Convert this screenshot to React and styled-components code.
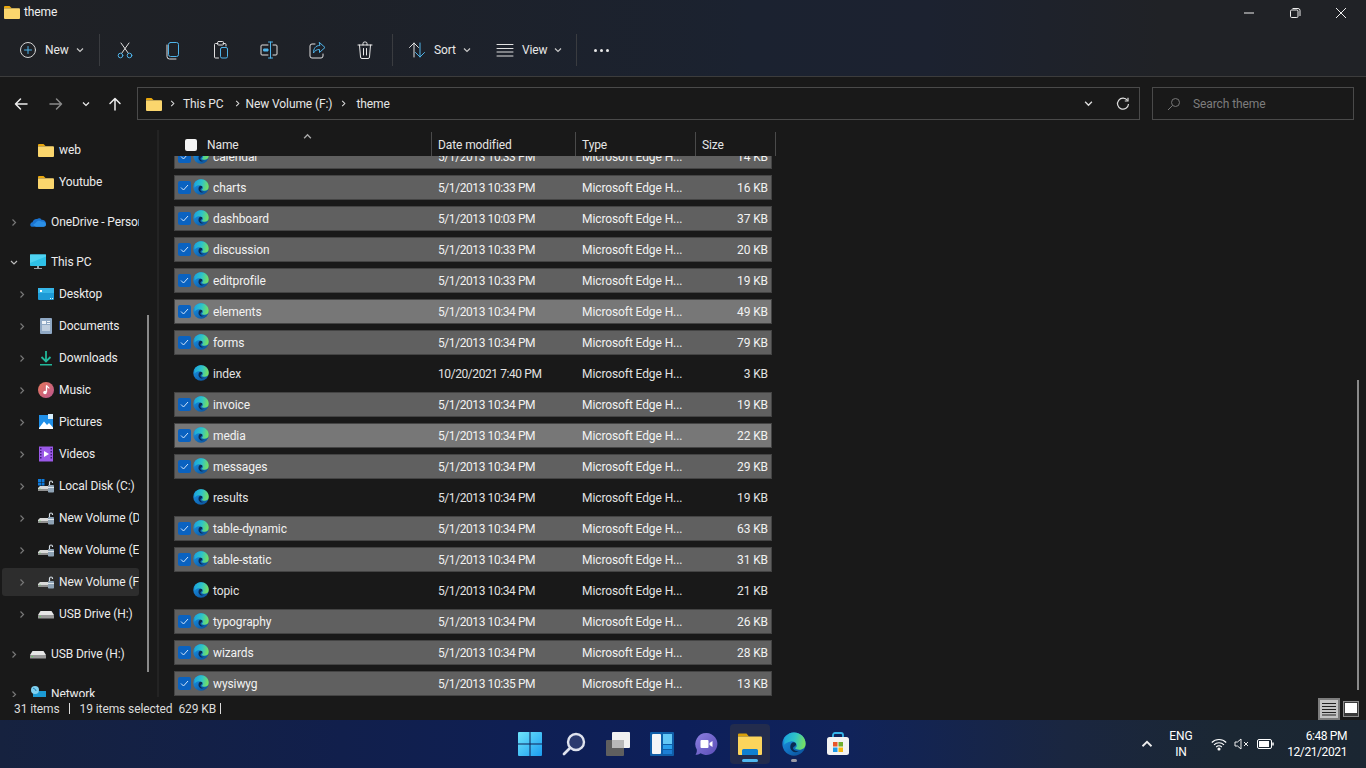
import React from "react";
import styled, { createGlobalStyle } from "styled-components";

const Global = createGlobalStyle`
  html, body { margin: 0; padding: 0; background: #191919; width: 1366px; height: 768px; overflow: hidden; }
  * { box-sizing: border-box; }
  body { font-family: "Roboto", "Open Sans", sans-serif; font-size: 12px; color: #e6e6e6; letter-spacing: -0.1px; }
`;

const Folder = ({ s = 16 }) => (
  <svg width={s} height={s} viewBox="0 0 16 16">
    <path d="M0 3a1 1 0 0 1 1-1h4.500L7.500 4H0z" fill="#e9a70d" />
    <path d="M0 4.200 h15a1 1 0 0 1 1 1V14a1 1 0 0 1-1 1H1a1 1 0 0 1-1-1z" fill="#fbd66d" />
  </svg>
);
const Edge = ({ s = 16 }) => (
  <svg width={s} height={s} viewBox="0 0 32 32">
    <defs>
      <linearGradient id="edgeA" x1="0" y1="0.300" x2="1" y2="0.500"><stop offset="0" stopColor="#1ba6dd" /><stop offset=".5" stopColor="#30c4c6" /><stop offset="1" stopColor="#78e05e" /></linearGradient>
      <linearGradient id="edgeB" x1="0" y1="0" x2="0.700" y2="1"><stop offset="0" stopColor="#1e9ae4" /><stop offset=".6" stopColor="#1274c4" /><stop offset="1" stopColor="#0c569f" /></linearGradient>
    </defs>
    <circle cx="16" cy="16" r="15.500" fill="url(#edgeB)" />
    <path d="M3 8C6.500 3 11 .5 16 .5c8.800 0 15.500 6.700 15.500 15 0 5-3.500 8-8.500 8-2.800 0-4.800-.8-5.800-2.200 2-.8 2.800-2.300 2.300-4.300C19 14 15.500 12 11.500 12.500 8 13 5 14.500 3 17z" fill="url(#edgeA)" />
    <path d="M11 20c0-4.500 2.300-6.500 4.500-6.500s3.500 1.500 3.200 3.200c-.3 1.300-1.300 2.200-2.700 2.800-1 .5-1.400 1.500-1 2.800.8 2.300 4 3.700 7.500 3.200-3 1.500-5.500 1.800-7.500.8-2.300-1.300-4-3.800-4-6.300z" fill="#0a2a52" />
  </svg>
);
const Cloud = () => (
  <svg width="16" height="16" viewBox="0 0 16 16"><path d="M1 12.500c-1.400-1.300-.8-4 1.500-4.300C3 6 5 4.500 7.200 5c1-1 3.300-1 4.300.7 2.300-.2 4.500 1.600 4.500 3.800 0 1.800-1.200 3.300-3 3.300H3c-.8 0-1.500-.1-2-.3z" fill="#1a73d0" /><path d="M6 8.500C7 6.500 10 6 11.500 7.500c2-.2 4.500 1 4.500 3 0 1.300-1 2.300-2.500 2.300H6L3 11z" fill="#2b8fe6" /></svg>
);
const Monitor = () => (
  <svg width="16" height="16" viewBox="0 0 16 16"><rect x="0" y="0.500" width="16" height="11.500" rx=".8" fill="#2ec1e8" /><path d="M0 .5h16v2L0 9z" fill="#4fd3f2" /><rect x="7" y="12" width="2" height="2" fill="#9aa5ad" /><rect x="4" y="14" width="8" height="1" fill="#9aa5ad" /></svg>
);
const DesktopIco = () => (
  <svg width="16" height="16" viewBox="0 0 16 16"><rect x="0" y="2" width="16" height="12" rx="1" fill="#1d9ad6" /><rect x="0" y="2" width="16" height="5" fill="#36b6e8" /><rect x="2" y="4" width="2" height="2" fill="#fff" /><rect x="12" y="12" width="1" height="1" fill="#dff" /><rect x="14" y="12" width="1" height="1" fill="#dff" /></svg>
);
const Docs = () => (
  <svg width="16" height="16" viewBox="0 0 16 16"><rect x="2" y="0" width="12" height="16" rx="1" fill="#8fa8c4" /><rect x="4" y="3" width="4" height="3" fill="#eef3f8" /><path d="M9 3.500h3M9 5.500h3M4 8h8M4 10h8M4 12h8" stroke="#eef3f8" strokeWidth="1" /></svg>
);
const Down = () => (
  <svg width="16" height="16" viewBox="0 0 16 16"><path d="M8 1v10M3.500 7 8 11.500 12.500 7" fill="none" stroke="#22b89a" strokeWidth="1.800" /><rect x="2" y="14" width="12" height="1.500" fill="#22b89a" /></svg>
);
const Music = () => (
  <svg width="16" height="16" viewBox="0 0 16 16"><defs><linearGradient id="mus" x1="0" y1="0" x2="1" y2="1"><stop offset="0" stopColor="#e8785a" /><stop offset="1" stopColor="#b9558f" /></linearGradient></defs><circle cx="8" cy="8" r="8" fill="url(#mus)" /><path d="M8.500 3.500v6.500" stroke="#fff" strokeWidth="1.300" /><circle cx="7" cy="10.500" r="1.800" fill="#fff" /><path d="M8.500 3.500c.5 1.500 2.500 1.500 2.500 3" stroke="#fff" strokeWidth="1.200" fill="none" /></svg>
);
const Pics = () => (
  <svg width="16" height="16" viewBox="0 0 16 16"><rect x="1" y="1" width="14" height="14" fill="#1f8fe8" /><path d="M1 14 6 7.500l3 3.500 2-2 4 4.500V15H1z" fill="#fff" /><rect x="10" y="0" width="5" height="5" fill="#d7eefc" /></svg>
);
const Videos = () => (
  <svg width="16" height="16" viewBox="0 0 16 16"><rect x="1" y="0.500" width="14" height="15" fill="#9b59e8" /><path d="M2 2h1.500v1.500H2zM2 5h1.500v1.500H2zM2 8h1.500v1.500H2zM2 11h1.500v1.500H2zM12.500 2H14v1.500h-1.500zM12.500 5H14v1.500h-1.500zM12.500 8H14v1.500h-1.500zM12.500 11H14v1.500h-1.500z" fill="#3d1b78" /><path d="M6 5l5 3-5 3z" fill="#fff" /></svg>
);
const Drive = ({ win }) => (
  <svg width="16" height="16" viewBox="0 0 16 16">
    <path d="M2 8h9v4H0V10z" fill="#d9d9d9" /><rect x="0" y="11" width="12" height="2" fill="#8f8f8f" /><rect x="1.500" y="10.500" width="1" height="1" fill="#5fd35f" />
    <rect x="10" y="7" width="6" height="7.500" rx=".8" fill="#8fa3b5" /><path d="M11.500 7V4.500a1.500 1.500 0 0 1 3 0V5" fill="none" stroke="#d5dde4" strokeWidth="1.200" /><rect x="10" y="9" width="6" height="1" fill="#dfe6ec" />
    {win && <path d="M0 1h3v3H0zM3.500 1h3v3h-3zM0 4.500h3v3H0zM3.500 4.500h3v3h-3z" fill="#0f7bdc" />}
  </svg>
);
const Usb = () => (
  <svg width="16" height="16" viewBox="0 0 16 16"><path d="M2.500 5h11L16 9H0z" fill="#e6e6e6" /><rect x="0" y="9" width="16" height="3.500" rx=".5" fill="#9a9a9a" /><rect x="1.500" y="10" width="1.500" height="1" fill="#5fd35f" /></svg>
);
const Net = () => (
  <svg width="16" height="16" viewBox="0 0 16 16"><rect x="3" y="5" width="13" height="10" fill="#1b9ad4" /><circle cx="5" cy="4" r="4" fill="#7fd0f0" /><path d="M3 2c1 1 3 1 3 3" stroke="#1f7cb0" fill="none" /></svg>
);

const Svg = ({ children, s = 20, v = 20 }) => (
  <svg width={s} height={s} viewBox={`0 0 ${v} ${v}`} fill="none" stroke="#e8e8e8" strokeWidth="1" strokeLinecap="round" strokeLinejoin="round">{children}</svg>
);
const B = "#4fb4ea";
const Tb = {
  plus: <Svg><circle cx="10" cy="10" r="7.500" stroke="#d5d5d5" /><path d="M10 6.500v7M6.500 10h7" stroke={B} /></Svg>,
  cut: <Svg><path d="M6 3l7.500 10.500M14 3 6.500 13.500" stroke="#e0e0e0" /><circle cx="5.500" cy="15.500" r="2.300" stroke={B} /><circle cx="14.500" cy="15.500" r="2.300" stroke={B} /></Svg>,
  copy: <Svg><rect x="5.500" y="2.500" width="10" height="14" rx="2" stroke={B} /><path d="M4 5v11.500a2.500 2.500 0 0 0 2.500 2.500H13" stroke="#e0e0e0" /></Svg>,
  paste: <Svg><path d="M7 3.500H4.500a1 1 0 0 0-1 1V17a1 1 0 0 0 1 1h3M12 3.500h2a1 1 0 0 1 1 1V6" stroke="#e0e0e0" /><rect x="6.500" y="1.500" width="6" height="3.500" rx="1" stroke="#e0e0e0" /><rect x="9.500" y="7.500" width="7" height="10.500" rx="1.500" stroke={B} /></Svg>,
  rename: <Svg><path d="M9 5H3a1 1 0 0 0-1 1v8a1 1 0 0 0 1 1h6M14 5h3a1 1 0 0 1 1 1v8a1 1 0 0 1-1 1h-3" stroke="#e0e0e0" /><path d="M11.500 2v16M9.500 2h4M9.500 18h4" stroke={B} /><rect x="5" y="9" width="4" height="2" fill={B} stroke={B} /></Svg>,
  share: <Svg><path d="M8 4H5a2 2 0 0 0-2 2v10a2 2 0 0 0 2 2h9a2 2 0 0 0 2-2v-2" stroke="#e0e0e0" /><path d="M12.500 2.500 18 7.500l-5.500 5V9.500c-3 0-4.500 1-6 3.500 0-4.500 2-7.500 6-7.500z" stroke={B} /></Svg>,
  del: <Svg><path d="M3 5h14M8 5V3.500a1.500 1.500 0 0 1 1.500-1.500h1A1.500 1.500 0 0 1 12 3.500V5M4.500 5l1 12a1.500 1.500 0 0 0 1.500 1.500h6a1.500 1.500 0 0 0 1.500-1.500l1-12M8.500 8.500v6.500M11.500 8.500v6.500" /></Svg>,
  sort: <Svg><path d="M7 17V3M2.500 7.500 7 3l4.500 4.500" stroke="#e0e0e0" /><path d="M13 3v14M8.500 12.500 13 17l4.500-4.500" stroke={B} /></Svg>,
  view: <Svg><path d="M2 4.500h16M2 8.500h16M2 12h16M2 16h16" stroke="#e0e0e0" /></Svg>,
};

const Chevron = ({ c = "#c8c8c8", dir = "down", s = 8 }) => (
  <svg width={s} height={s} viewBox="0 0 8 8" fill="none" stroke={c} strokeWidth="1.200">
    {dir === "down" ? <path d="M1 2.500 4 5.500 7 2.500" /> : dir === "right" ? <path d="M2.500 1 5.500 4 2.500 7" /> : <path d="M1 5.500 4 2.500 7 5.500" />}
  </svg>
);

const Shell = styled.div`
  width: 1366px; height: 768px; display: flex; flex-direction: column; overflow: hidden; background: #191919;
`;
const Head = styled.div`
  height: 77px; flex: none; border-bottom: 1px solid #3c3c3c;
  background: linear-gradient(90deg, #1f2125 0, #1e2127 20%, #1b2230 55%, #1c2230 68%, #202226 85%, #202226 100%);
`;
const TitleBar = styled.div`
  height: 26px; display: flex; align-items: center; justify-content: space-between; padding: 0 2px 0 4px;
`;
const TitleLeft = styled.div`
  display: flex; align-items: center; gap: 4px; font-size: 12px; color: #f0f0f0; margin-top: -3px;
`;
const WinBtns = styled.div`display: flex;`;
const WinBtn = styled.div`
  width: 46px; height: 28px; display: flex; align-items: center; justify-content: center;
`;
const Toolbar = styled.div`
  height: 48px; display: flex; align-items: center; padding-left: 7px;
`;
const TextBtn = styled.div`
  display: flex; align-items: center; height: 36px; width: ${p => p.$w}px; padding-left: ${p => p.$pl}px; gap: 7px; color: #e8e8e8; font-size: 12px;
  & > span { width: ${p => p.$tw}px; }
`;
const IconBtns = styled.div`display: flex; padding: 0 3px 0 1px;`;
const IconBtn = styled.div`
  width: 48px; height: 36px; display: flex; align-items: center; justify-content: center;
`;
const Sep = styled.div`
  width: 1px; height: 32px; background: #3a3c40; flex: none;
`;
const Dots = styled.div`
  width: 48px; display: flex; align-items: center; justify-content: center; gap: 3px;
  & > i { width: 3px; height: 3px; border-radius: 50%; background: #e8e8e8; display: block; }
`;
const Nav = styled.div`
  height: 53px; flex: none; display: flex; align-items: center;
`;
const NavBtns = styled.div`
  width: 137px; display: flex; align-items: center; padding-left: 3px;
`;
const NavBtn = styled.div`
  width: ${p => p.$w}px; display: flex; align-items: center; justify-content: center;
`;
const Addr = styled.div`
  width: 1003px; height: 33px; border: 1px solid #4a4a4a; display: flex; align-items: center; padding-left: 8px; color: #e6e6e6;
`;
const Crumbs = styled.div`
  flex: 1; display: flex; align-items: center;
`;
const Crumb = styled.span`
  margin: 0 ${p => p.$mr}px 0 ${p => p.$ml}px; white-space: nowrap; display: flex;
`;
const AddrTail = styled.div`
  display: flex; align-items: center; gap: 23px; padding-right: 9px;
`;
const Search = styled.div`
  width: 202px; height: 33px; margin-left: 12px; border: 1px solid #4a4a4a; display: flex; align-items: center; padding-left: 14px; gap: 12px; color: #7d7d7d;
`;
const Main = styled.div`
  flex: 1; min-height: 0; display: flex; position: relative;
`;
const Side = styled.div`
  width: 157px; flex: none; padding: 4px 0 0 2px; overflow: hidden; position: relative;
`;
const SideRow = styled.div`
  width: 137px; height: ${p => (p.$sel ? 28 : 32)}px; margin: ${p => (p.$sel ? "2px 0" : "0")}; margin-top: ${p => (p.$gap ? "8px" : p.$sel ? "2px" : "0")};
  display: flex; align-items: center; white-space: nowrap; overflow: hidden;
  padding-left: ${p => (p.$lvl ? 16 : 8)}px;
  background: ${p => (p.$sel ? "#2d2d2d" : "transparent")}; border-radius: 3px;
  color: #ececec;
`;
const Arrow = styled.div`
  width: 8px; flex: none; margin-right: 12px; display: flex; align-items: center; justify-content: center;
`;
const SideIcon = styled.div`
  width: 16px; height: 16px; flex: none; margin-right: 5px; display: flex;
`;
const Thumb = styled.div`
  position: absolute; left: 147px; top: 185px; width: 2px; height: 357px; background: #8a8a8a;
`;
const Divider = styled.div`
  width: 2px; flex: none; background: #232323;
`;
const ListPane = styled.div`
  flex: 1; min-width: 0; display: flex; flex-direction: column; position: relative;
`;
const HeaderRow = styled.div`
  height: 26px; flex: none; display: flex; position: relative; padding-top: 2px; color: #e6e6e6;
`;
const Col = styled.div`
  width: ${p => p.$w}px; border-right: 1px solid #4a4a4a; display: flex; align-items: center; padding-left: ${p => p.$pl}px; padding-top: 2px;
`;
const HeadCheck = styled.div`
  width: 12px; height: 12px; background: #f4f4f4; border-radius: 2px; margin-right: 10px;
`;
const SortCaret = styled.div`
  position: absolute; left: 144px; top: 0; 
`;
const Rows = styled.div`
  flex: 1; min-height: 0; overflow: hidden; padding-left: 15px;
`;
const RowStack = styled.div`
  margin-top: -12px; display: flex; flex-direction: column; gap: 6px;
`;
const Row = styled.div`
  width: 598px; height: 25px; flex: none; display: grid; grid-template-columns: 263px 144px 120px 1fr; align-items: center;
  border: 1px solid ${p => (p.$state ? "#444" : "transparent")};
  background: ${p => (p.$state === 2 ? "#777" : p.$state === 1 ? "#606060" : "transparent")};
  color: ${p => (p.$state ? "#f2f2f2" : "#e2e2e2")};
`;
const NameCell = styled.div`
  display: flex; align-items: center; padding-left: 3px;
`;
const Check = styled.div`
  width: 13px; height: 13px; border-radius: 2px; background: ${p => (p.$on ? "#0a62c0" : "transparent")}; display: flex; align-items: center; justify-content: center; margin-right: 2px;
`;
const NameIcon = styled.div`
  width: 16px; height: 16px; margin-right: 4px; margin-top: -2px; display: flex;
`;
const DateCell = styled.span`
  letter-spacing: -0.42px;
`;
const SizeCell = styled.div`
  text-align: right; padding-right: 3px;
`;
const ListThumb = styled.div`
  position: absolute; right: 7px; top: 250px; width: 2px; height: 310px; background: #8a8a8a;
`;
const Status = styled.div`
  height: 23px; flex: none; display: flex; align-items: center; padding-left: 14px; color: #dcdcdc; background: #191919; position: relative;
`;
const StatusSep = styled.div`
  width: 1px; height: 11px; background: #dcdcdc; margin: 0 ${p => p.$r}px 0 ${p => p.$l}px;
`;
const SelSize = styled.span`margin-left: 6px;`;
const ViewBtns = styled.div`
  margin-left: auto; display: flex; align-items: center; gap: 3px; padding-right: 7px;
`;
const ViewDetails = styled.div`
  width: 22px; height: 22px; border: 2px solid #7d7d7d; background: #c4c4c4; display: flex; align-items: center; justify-content: center;
`;
const ViewThumb = styled.div`
  width: 16px; height: 16px; border: 1px solid #8a8a8a; background: #3a3a3a; display: flex; align-items: flex-start; justify-content: center; padding-top: 1px;
  & > i { display: block; width: 12px; height: 10px; background: #fff; }
`;
const Task = styled.div`
  height: 48px; flex: none; display: flex; align-items: center; position: relative;
  background: linear-gradient(90deg, #16223f 0, #111f4c 25%, #0d1f5a 50%, #10235a 62%, #1a2640 78%, #1b2733 90%, #1b2632 100%);
`;
const TaskIcons = styled.div`
  display: flex; margin-left: 510px; gap: 4px; height: 40px;
`;
const TaskBtn = styled.div`
  width: 40px; height: 40px; display: flex; align-items: center; justify-content: center; position: relative; border-radius: 4px;
  background: ${p => (p.$active ? "#232c4d" : "transparent")};
`;
const Mark = styled.div`
  position: absolute; bottom: 2px; left: 50%; transform: translateX(-50%); height: 3px; border-radius: 2px;
  width: ${p => (p.$active ? 16 : 6)}px; background: ${p => (p.$active ? "#4fb8f0" : "#9a9aa5")};
`;
const Tray = styled.div`
  margin-left: auto; display: flex; align-items: center; padding-right: 19px; color: #fff; font-size: 12px;
`;
const Lang = styled.div`
  text-align: center; line-height: 16px; margin: 0 17px 0 15px; width: 26px;
`;
const TrayIcons = styled.div`display: flex; align-items: center; gap: 7px; margin-right: 10px;`;
const Clock = styled.div`
  text-align: right; line-height: 16px; width: 62px; white-space: nowrap; letter-spacing: -0.4px;
`;

const side = [
  { t: "web", i: <Folder />, lvl: 1, noArrow: true },
  { t: "Youtube", i: <Folder />, lvl: 1, noArrow: true },
  { t: "OneDrive - Personal", i: <Cloud />, gap: true },
  { t: "This PC", i: <Monitor />, gap: true, open: true },
  { t: "Desktop", i: <DesktopIco />, lvl: 1 },
  { t: "Documents", i: <Docs />, lvl: 1 },
  { t: "Downloads", i: <Down />, lvl: 1 },
  { t: "Music", i: <Music />, lvl: 1 },
  { t: "Pictures", i: <Pics />, lvl: 1 },
  { t: "Videos", i: <Videos />, lvl: 1 },
  { t: "Local Disk (C:)", i: <Drive win />, lvl: 1 },
  { t: "New Volume (D:)", i: <Drive />, lvl: 1 },
  { t: "New Volume (E:)", i: <Drive />, lvl: 1 },
  { t: "New Volume (F:)", i: <Drive />, lvl: 1, sel: true },
  { t: "USB Drive (H:)", i: <Usb />, lvl: 1 },
  { t: "USB Drive (H:)", i: <Usb />, gap: true },
  { t: "Network", i: <Net />, gap: true },
];

const E = "Microsoft Edge H...";
const files = [
  ["calendar", "5/1/2013 10:33 PM", "14 KB", 1],
  ["charts", "5/1/2013 10:33 PM", "16 KB", 1],
  ["dashboard", "5/1/2013 10:03 PM", "37 KB", 1],
  ["discussion", "5/1/2013 10:33 PM", "20 KB", 1],
  ["editprofile", "5/1/2013 10:33 PM", "19 KB", 1],
  ["elements", "5/1/2013 10:34 PM", "49 KB", 2],
  ["forms", "5/1/2013 10:34 PM", "79 KB", 1],
  ["index", "10/20/2021 7:40 PM", "3 KB", 0],
  ["invoice", "5/1/2013 10:34 PM", "19 KB", 1],
  ["media", "5/1/2013 10:34 PM", "22 KB", 2],
  ["messages", "5/1/2013 10:34 PM", "29 KB", 1],
  ["results", "5/1/2013 10:34 PM", "19 KB", 0],
  ["table-dynamic", "5/1/2013 10:34 PM", "63 KB", 1],
  ["table-static", "5/1/2013 10:34 PM", "31 KB", 1],
  ["topic", "5/1/2013 10:34 PM", "21 KB", 0],
  ["typography", "5/1/2013 10:34 PM", "26 KB", 1],
  ["wizards", "5/1/2013 10:34 PM", "28 KB", 1],
  ["wysiwyg", "5/1/2013 10:35 PM", "13 KB", 1],
];

const Arr = ({ d }) => (
  <svg width="16" height="16" viewBox="0 0 16 16" fill="none" stroke={d === "fwd" ? "#8a8a8a" : "#ededed"} strokeWidth="1.500" strokeLinecap="round" strokeLinejoin="round">
    {d === "up" ? <path d="M8 14V2.500M3 7.500l5-5 5 5" /> : d === "back" ? <path d="M14 8H2.500M7.500 3l-5 5 5 5" /> : <path d="M2 8h11.500M8.500 3l5 5-5 5" />}
  </svg>
);

const Start = () => (
  <svg width="24" height="24" viewBox="0 0 24 24"><defs><linearGradient id="st" x1="0" y1="0" x2="1" y2="1"><stop offset="0" stopColor="#6fe4fb" /><stop offset="1" stopColor="#1b9df0" /></linearGradient></defs><path d="M0 1a1 1 0 0 1 1-1h10.500v11.500H0zM12.500 0H23a1 1 0 0 1 1 1v10.500H12.500zM0 12.500h11.500V24H1a1 1 0 0 1-1-1zM12.500 12.500H24V23a1 1 0 0 1-1 1H12.500z" fill="url(#st)" /></svg>
);
const TSearch = () => (
  <svg width="24" height="24" viewBox="0 0 24 24"><circle cx="14" cy="10" r="8" fill="#2b3a6e" stroke="#dfe3ee" strokeWidth="2.400" /><path d="M8 16l-6 6" stroke="#dfe3ee" strokeWidth="2.800" strokeLinecap="round" /></svg>
);
const TView = () => (
  <svg width="24" height="24" viewBox="0 0 24 24"><rect x="0" y="8" width="18" height="16" rx="1" fill="#5f5f5f" /><rect x="6" y="0" width="18" height="16" rx="1" fill="#f1f1f1" /><rect x="6" y="8" width="12" height="8" fill="#b8b8b8" /></svg>
);
const TWidgets = () => (
  <svg width="24" height="24" viewBox="0 0 24 24"><rect width="24" height="24" rx="1" fill="#0f5ea8" /><rect x="2" y="2" width="9" height="20" rx="1" fill="#f4f6f8" /><rect x="13" y="2" width="9" height="10" fill="#63c7f5" /><rect x="13" y="13" width="9" height="4" fill="#2aa0ec" /><rect x="13" y="18" width="9" height="4" fill="#1d7fd4" /></svg>
);
const TChat = () => (
  <svg width="24" height="24" viewBox="0 0 24 24"><defs><linearGradient id="ch" x1="0" y1="0" x2="1" y2="1"><stop offset="0" stopColor="#8b80e0" /><stop offset="1" stopColor="#5b4db8" /></linearGradient></defs><path d="M12.500 1a11 11 0 1 1-6 20.300c-1.500 1-3 1.500-5 1.500 1-1.500 1.500-3 1.300-5.300A11 11 0 0 1 12.500 1z" fill="url(#ch)" /><rect x="6.500" y="8" width="8" height="8" rx="1" fill="#fff" /><path d="M15.500 11l3-2v6l-3-2z" fill="#fff" /></svg>
);
const TExplorer = () => (
  <svg width="24" height="24" viewBox="0 0 24 24"><path d="M0 2.500A1 1 0 0 1 1 1.500h7.500L11 4.500H0z" fill="#d9a00a" /><path d="M0 4.500h23a1 1 0 0 1 1 1V22a1 1 0 0 1-1 1H1a1 1 0 0 1-1-1z" fill="#fcd55c" /><path d="M4 23v-4.500A1.500 1.500 0 0 1 5.500 17h13a1.500 1.500 0 0 1 1.500 1.500V23z" fill="#0f7fd0" /></svg>
);
const TStore = () => (
  <svg width="24" height="24" viewBox="0 0 24 24"><path d="M7 6V3a2 2 0 0 1 2-2h6a2 2 0 0 1 2 2v3" fill="none" stroke="#35b5ea" strokeWidth="1.800" /><rect x="1" y="5" width="22" height="18" rx="2.500" fill="#f3f3f3" /><rect x="7" y="10" width="4.500" height="4.500" fill="#e8562b" /><rect x="12.500" y="10" width="4.500" height="4.500" fill="#6fae2e" /><rect x="7" y="15.500" width="4.500" height="4.500" fill="#1e9be8" /><rect x="12.500" y="15.500" width="4.500" height="4.500" fill="#f6b70f" /></svg>
);

export default function App() {
  return (
    <Shell>
      <Global />
      <Head>
        <TitleBar>
          <TitleLeft><Folder /><span>theme</span></TitleLeft>
          <WinBtns>
            <WinBtn><svg width="12" height="12" viewBox="0 0 12 12"><path d="M1 6h10" stroke="#eee" /></svg></WinBtn>
            <WinBtn><svg width="12" height="12" viewBox="0 0 12 12" fill="none" stroke="#eee"><rect x="1.500" y="3" width="7.500" height="7.500" rx="1.200" /><path d="M3.500 1.500h5.500a2 2 0 0 1 2 2V9" /></svg></WinBtn>
            <WinBtn><svg width="12" height="12" viewBox="0 0 12 12" stroke="#eee"><path d="M1 1l10 10M11 1 1 11" /></svg></WinBtn>
          </WinBtns>
        </TitleBar>
        <Toolbar>
          <TextBtn $w={92} $pl={11} $tw={24}>{Tb.plus}<span>New</span><Chevron /></TextBtn>
          <Sep />
          <IconBtns>
            <IconBtn>{Tb.cut}</IconBtn>
            <IconBtn>{Tb.copy}</IconBtn>
            <IconBtn>{Tb.paste}</IconBtn>
            <IconBtn>{Tb.rename}</IconBtn>
            <IconBtn>{Tb.share}</IconBtn>
            <IconBtn>{Tb.del}</IconBtn>
          </IconBtns>
          <Sep />
          <TextBtn $w={88} $pl={14} $tw={22}>{Tb.sort}<span>Sort</span><Chevron /></TextBtn>
          <TextBtn $w={95} $pl={14} $tw={25}>{Tb.view}<span>View</span><Chevron /></TextBtn>
          <Sep />
          <Dots><i /><i /><i /></Dots>
        </Toolbar>
      </Head>
      <Nav>
        <NavBtns>
          <NavBtn $w={36}><Arr d="back" /></NavBtn>
          <NavBtn $w={34}><Arr d="fwd" /></NavBtn>
          <NavBtn $w={26}><Chevron c="#ededed" /></NavBtn>
          <NavBtn $w={32}><Arr d="up" /></NavBtn>
        </NavBtns>
        <Addr>
          <Crumbs>
            <Folder />
            <Crumb $ml={7} $mr={7}><Chevron dir="right" c="#ddd" s={7} /></Crumb>
            <span>This PC</span>
            <Crumb $ml={10} $mr={5}><Chevron dir="right" c="#ddd" s={7} /></Crumb>
            <span>New Volume (F:)</span>
            <Crumb $ml={8} $mr={9}><Chevron dir="right" c="#ddd" s={7} /></Crumb>
            <span>theme</span>
          </Crumbs>
          <AddrTail>
            <Chevron c="#ddd" s={9} />
            <svg width="14" height="14" viewBox="0 0 14 14" fill="none" stroke="#ddd" strokeWidth="1.200"><path d="M11.500 3.500A5.500 5.500 0 1 0 12.500 7" /><path d="M12 .8V4H8.800" /></svg>
          </AddrTail>
        </Addr>
        <Search>
          <svg width="14" height="14" viewBox="0 0 14 14" fill="none" stroke="#777"><circle cx="8.500" cy="5.500" r="4" /><path d="M5.500 8.500 1 13" /></svg>
          <span>Search theme</span>
        </Search>
      </Nav>
      <Main>
        <Side>
          {side.map((r, i) => (
            <SideRow key={i} $lvl={r.lvl} $gap={r.gap} $sel={r.sel}>
              <Arrow>{!r.noArrow && <Chevron dir={r.open ? "down" : "right"} c={r.open ? "#bbb" : "#777"} s={9} />}</Arrow>
              <SideIcon>{r.i}</SideIcon>
              <span>{r.t}</span>
            </SideRow>
          ))}
          <Thumb />
        </Side>
        <Divider />
        <ListPane>
          <HeaderRow>
            <Col $w={273} $pl={26}><HeadCheck /><span>Name</span></Col>
            <SortCaret><Chevron dir="up" c="#aaa" s={9} /></SortCaret>
            <Col $w={144} $pl={6}>Date modified</Col>
            <Col $w={120} $pl={6}>Type</Col>
            <Col $w={80} $pl={6}>Size</Col>
          </HeaderRow>
          <Rows>
            <RowStack>
              {files.map(f => (
                <Row key={f[0]} $state={f[3]}>
                  <NameCell>
                    <Check $on={f[3]}>
                      {f[3] ? <svg width="9" height="9" viewBox="0 0 9 9" fill="none" stroke="#cfe4fb" strokeWidth="1"><path d="M1 4.500 3.500 7 8 2" /></svg> : null}
                    </Check>
                    <NameIcon><Edge /></NameIcon>
                    <span>{f[0]}</span>
                  </NameCell>
                  <DateCell>{f[1]}</DateCell>
                  <span>{E}</span>
                  <SizeCell>{f[2]}</SizeCell>
                </Row>
              ))}
            </RowStack>
          </Rows>
          <ListThumb />
        </ListPane>
      </Main>
      <Status>
        <span>31 items</span>
        <StatusSep $l={9} $r={10} />
        <span>19 items selected</span>
        <SelSize>629 KB</SelSize>
        <StatusSep $l={4} $r={0} />
        <ViewBtns>
          <ViewDetails>
            <svg width="14" height="14" viewBox="0 0 14 14" stroke="#222"><path d="M0 1.500h14M0 4.500h14M0 7.500h14M0 10.500h14M0 13h14" /></svg>
          </ViewDetails>
          <ViewThumb><i /></ViewThumb>
        </ViewBtns>
      </Status>
      <Task>
        <TaskIcons>
          <TaskBtn><Start /></TaskBtn>
          <TaskBtn><TSearch /></TaskBtn>
          <TaskBtn><TView /></TaskBtn>
          <TaskBtn><TWidgets /></TaskBtn>
          <TaskBtn><TChat /></TaskBtn>
          <TaskBtn $active><TExplorer /><Mark $active /></TaskBtn>
          <TaskBtn><Edge s={24} /><Mark /></TaskBtn>
          <TaskBtn><TStore /></TaskBtn>
        </TaskIcons>
        <Tray>
          <Chevron dir="up" c="#eee" s={12} />
          <Lang>ENG<br />IN</Lang>
          <TrayIcons>
            <svg width="16" height="16" viewBox="0 0 16 16" fill="none" stroke="#fff" strokeWidth="1.100"><path d="M.8 6.500a10 10 0 0 1 14.400 0M3 8.800a7 7 0 0 1 10 0M5.200 11a4 4 0 0 1 5.600 0" /><circle cx="8" cy="13" r="1" fill="#fff" /></svg>
            <svg width="16" height="16" viewBox="0 0 16 16" fill="none" stroke="#eee"><path d="M1 6h2.500L7 3v10L3.500 10H1zM10 6l4 4M14 6l-4 4" /></svg>
            <svg width="18" height="16" viewBox="0 0 18 16" fill="none" stroke="#fff"><rect x=".5" y="3.500" width="14" height="9" rx="1.500" /><rect x="2" y="5" width="10" height="6" fill="#fff" stroke="none" /><path d="M16 6.500v3" strokeWidth="1.500" /></svg>
          </TrayIcons>
          <Clock>6:48 PM<br />12/21/2021</Clock>
        </Tray>
      </Task>
    </Shell>
  );
}
